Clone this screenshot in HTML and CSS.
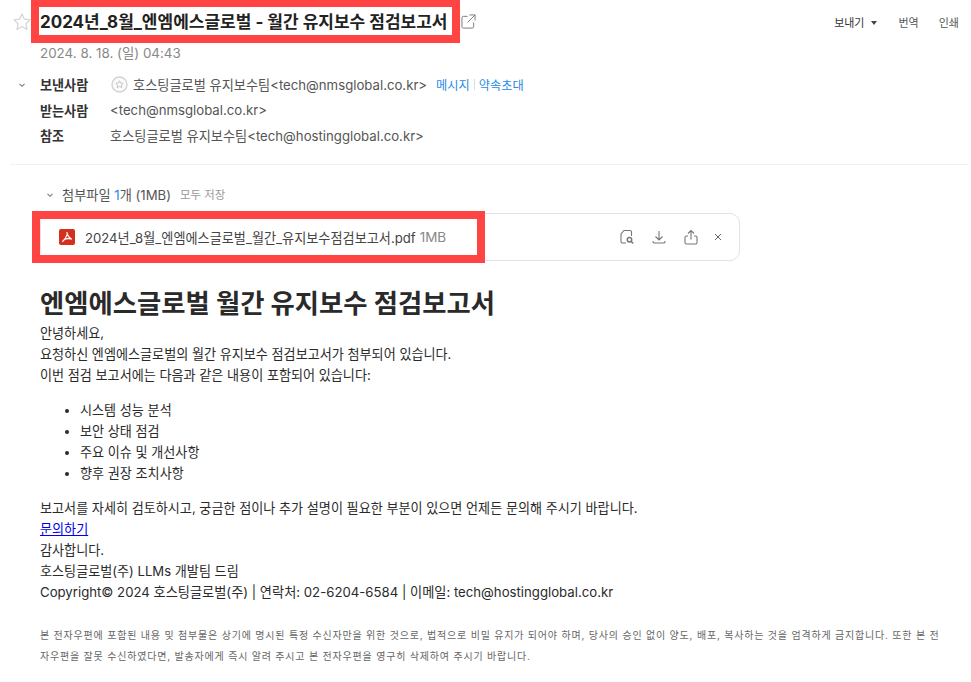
FILE: index.html
```html
<!DOCTYPE html>
<html lang="ko">
<head>
    <meta charset="UTF-8">
    <title>2024년_8월_엔엠에스글로벌 - 월간 유지보수 점검보고서</title>
    <link rel="stylesheet" href="styles.css">
</head>
<body>
    <div class="mail-head">
        <div class="title-row">
            <svg class="star" width="20" height="20" viewBox="0 0 20 20"><path d="M10 2l2.400 5.200 5.600.7-4.100 3.900 1.100 5.600L10 14.600l-5 2.800 1.100-5.600L2 7.900l5.600-.7z" fill="none" stroke="#d4d4d4" stroke-width="1.200" stroke-linejoin="round"/></svg>
            <h1 class="subject">2024년_8월_엔엠에스글로벌 - 월간 유지보수 점검보고서</h1>
            <svg class="popout" width="15" height="15" viewBox="0 0 16 16"><path d="M7 2.500H2.500A1.500 1.500 0 0 0 1 4v9.500A1.500 1.500 0 0 0 2.500 15H12a1.500 1.500 0 0 0 1.500-1.500V9M9 1h6v6M15 1L7 9" fill="none" stroke="#777" stroke-width="1"/></svg>
            <div class="tools">
                <span class="tool tool-dark">보내기<i class="caret"></i></span>
                <span class="tool">번역</span>
                <span class="tool">인쇄</span>
            </div>
        </div>
        <div class="date">2024. 8. 18. (일) 04:43</div>
        <div class="people">
            <div class="person">
                <svg class="fold" width="8" height="6" viewBox="0 0 8 6"><path d="M1.500 1.800L4 4.300l2.500-2.500" fill="none" stroke="#777" stroke-width="1.100"/></svg>
                <span class="label">보낸사람</span>
                <span class="addr">
                    <svg class="vip" width="17" height="17" viewBox="0 0 17 17"><circle cx="8.500" cy="8.500" r="7.500" fill="#fbfbfb" stroke="#d2d2d2" stroke-width="1.400"/><path d="M8.500 4.800l1.100 2.300 2.500.3-1.800 1.700.5 2.500-2.300-1.200-2.300 1.200.5-2.500-1.800-1.700 2.500-.3z" fill="#fff" stroke="#bdbdbd" stroke-width=".9" stroke-linejoin="round"/></svg>
                    호스팅글로벌 유지보수팀&lt;tech@nmsglobal.co.kr&gt;
                </span>
                <a class="act">메시지</a><span class="act-sep"></span><a class="act">약속초대</a>
            </div>
            <div class="person">
                <span class="label">받는사람</span>
                <span class="addr">&lt;tech@nmsglobal.co.kr&gt;</span>
            </div>
            <div class="person">
                <span class="label">참조</span>
                <span class="addr">호스팅글로벌 유지보수팀&lt;tech@hostingglobal.co.kr&gt;</span>
            </div>
        </div>
    </div>

    <div class="attach">
        <div class="attach-head">
            <svg class="fold" width="8" height="6" viewBox="0 0 8 6"><path d="M1.500 1.800L4 4.300l2.500-2.500" fill="none" stroke="#777" stroke-width="1.100"/></svg>
            <span>첨부파일 <b class="count">1</b>개 (1MB)</span>
            <span class="save-all">모두 저장</span>
        </div>
        <div class="file-box">
            <svg class="pdf" width="16" height="16" viewBox="0 0 16 16"><rect width="16" height="16" rx="2" fill="#d3301f"/><path d="M7.800 3.200C8.300 6.200 10 9 13 10.200M8 5.500C7.500 8 6 10.500 3.300 12.700M5.600 10.200C7.500 9.500 10 9.500 12.500 10" fill="none" stroke="#fff" stroke-width="1.200"/></svg>
            <span class="file-name">2024년_8월_엔엠에스글로벌_월간_유지보수점검보고서.pdf</span>
            <span class="file-size">1MB</span>
            <div class="file-tools">
                <svg width="16" height="16" viewBox="0 0 16 16" fill="none" stroke="#777" stroke-width="1.100"><path d="M7 14H3.500A1.500 1.500 0 0 1 2 12.500V5l3-3.500h6A1.500 1.500 0 0 1 12.500 3v4"/><circle cx="10.500" cy="10.800" r="2.200" stroke-width="1.500"/><path d="M12.200 12.500l2 2" stroke-width="1.500"/></svg>
                <svg width="16" height="16" viewBox="0 0 16 16" fill="none" stroke="#777" stroke-width="1.100"><path d="M8 2v8.500M4.500 7.500L8 11l3.500-3.500M2 12v.5A1.500 1.500 0 0 0 3.500 14h9a1.500 1.500 0 0 0 1.500-1.500V12"/></svg>
                <svg width="16" height="16" viewBox="0 0 16 16" fill="none" stroke="#777" stroke-width="1.100"><path d="M8 10.500V1.500M5 4.500l3-3 3 3M5 7H3.500A1.500 1.500 0 0 0 2 8.500v5A1.500 1.500 0 0 0 3.500 15h9a1.500 1.500 0 0 0 1.500-1.500v-5A1.500 1.500 0 0 0 12.500 7H11"/></svg>
                <svg class="file-close" width="16" height="16" viewBox="0 0 16 16" fill="none" stroke="#666" stroke-width="1"><path d="M5 5l6 6M11 5l-6 6"/></svg>
            </div>
        </div>
    </div>

    <div class="mail-body">
        <h2 class="body-title">엔엠에스글로벌 월간 유지보수 점검보고서</h2>
        <p>안녕하세요,</p>
        <p>요청하신 엔엠에스글로벌의 월간 유지보수 점검보고서가 첨부되어 있습니다.</p>
        <p>이번 점검 보고서에는 다음과 같은 내용이 포함되어 있습니다:</p>
        <ul class="check-list">
            <li>시스템 성능 분석</li>
            <li>보안 상태 점검</li>
            <li>주요 이슈 및 개선사항</li>
            <li>향후 권장 조치사항</li>
        </ul>
        <p>보고서를 자세히 검토하시고, 궁금한 점이나 추가 설명이 필요한 부분이 있으면 언제든 문의해 주시기 바랍니다.</p>
        <p><a class="link" href="#">문의하기</a></p>
        <p>감사합니다.</p>
        <p>호스팅글로벌(주) LLMs 개발팀 드림</p>
        <p class="copyright">Copyright© 2024 호스팅글로벌(주) | 연락처: 02-6204-6584 | 이메일: tech@hostingglobal.co.kr</p>
        <p class="notice">본 전자우편에 포함된 내용 및 첨부물은 상기에 명시된 특정 수신자만을 위한 것으로, 법적으로 비밀 유지가 되어야 하며, 당사의 승인 없이 양도, 배포, 복사하는 것을 엄격하게 금지합니다. 또한 본 전자우편을 잘못 수신하였다면, 발송자에게 즉시 알려 주시고 본 전자우편을 영구히 삭제하여 주시기 바랍니다.</p>
    </div>

    <!-- screenshot annotation -->
    <div class="mark mark-title"></div>
    <div class="mark mark-file"></div>
</body>
</html>
```

FILE: styles.css
```css
* {
    margin: 0;
    padding: 0;
    box-sizing: border-box;
}
body {
    font-family: Inter, "Noto Sans CJK KR", sans-serif;
    font-size: 13.1px;
    color: #222;
    background: #fff;
    overflow: hidden;
    height: 682px;
}
.mail-head {
    margin-left: 10px;
    margin-right: 3px;
    padding-bottom: 15.500px;
    border-bottom: 1px solid #f1f1f1;
}
.title-row {
    display: flex;
    align-items: center;
    height: 43px;
}
.star {
    margin-left: 2px;
}
.subject {
    margin-left: 8px;
    font-size: 17px;
    font-weight: 700;
    color: #222;
    line-height: 44px;
}
.popout {
    margin-left: 14px;
}
.tools {
    margin-left: auto;
    display: flex;
    gap: 20px;
    padding-right: 9px;
    font-size: 11px;
    color: #555;
}
.tool-dark {
    color: #333;
}
.caret {
    display: inline-block;
    margin-left: 6px;
    margin-right: 2px;
    vertical-align: 2px;
    border-left: 3px solid transparent;
    border-right: 3px solid transparent;
    border-top: 4px solid #444;
}
.date {
    margin-left: 30px;
    font-size: 13.4px;
    line-height: 20px;
    color: #888;
}
.people {
    margin-top: 9px;
}
.person {
    display: flex;
    align-items: center;
    height: 25.500px;
    padding-left: 30px;
    position: relative;
    color: #555;
}
.fold {
    position: absolute;
    left: 8px;
    top: 10px;
}
.label {
    width: 70px;
    font-weight: 700;
    color: #333;
}
.addr {
    display: flex;
    align-items: center;
    gap: 5px;
    font-size: 13.2px;
}
.vip {
    margin-left: 1px;
}
.act {
    color: #2a8ae6;
    font-size: 12.200px;
}
.addr + .act {
    margin-left: 9px;
}
.act-sep {
    width: 1px;
    height: 11px;
    margin: 0 4px;
    background: #dcdcdc;
}
.attach {
    margin-top: 19px;
    padding-left: 40px;
}
.attach-head {
    position: relative;
    display: flex;
    gap: 9px;
    align-items: center;
    margin-left: 22px;
    height: 20px;
    font-size: 13.200px;
    color: #555;
}
.attach-head .fold {
    left: -16px;
    top: 8px;
}
.count {
    font-weight: 400;
    color: #2a8ae6;
}
.save-all {
    font-size: 11.400px;
    color: #999;
}
.file-box {
    display: flex;
    align-items: center;
    width: 700px;
    height: 48px;
    margin-top: 9px;
    padding-left: 18px;
    border: 1px solid #e3e3e3;
    border-radius: 10px;
}
.file-name {
    margin-left: 10px;
    color: #444;
    font-size: 13.150px;
}
.file-size {
    margin-left: 4px;
    color: #888;
    font-size: 13.500px;
}
.file-tools {
    margin-left: auto;
    display: flex;
    align-items: center;
    gap: 16px;
    padding-right: 13px;
}
.file-close {
    margin-left: -5px;
}
.mail-body {
    padding: 0 30px 0 40px;
    margin-top: 24px;
    line-height: 21px;
    color: #2a2a2a;
}
.body-title {
    font-size: 26.350px;
    font-weight: 700;
    line-height: 36px;
    margin-bottom: 2px;
}
.check-list {
    margin: 14px 0;
    padding-left: 40px;
}
.link {
    color: #00e;
    text-decoration: underline;
}
.copyright {
    font-size: 13.200px;
}
.notice {
    margin-top: 22px;
    font-size: 10px;
    letter-spacing: .8px;
    line-height: 21px;
    color: #666;
}
.mark {
    position: absolute;
    border: 8px solid #ff4444;
}
.mark-title {
    left: 31px;
    top: -1px;
    width: 429px;
    height: 44px;
}
.mark-file {
    left: 32px;
    top: 211px;
    width: 453px;
    height: 52px;
}
```
